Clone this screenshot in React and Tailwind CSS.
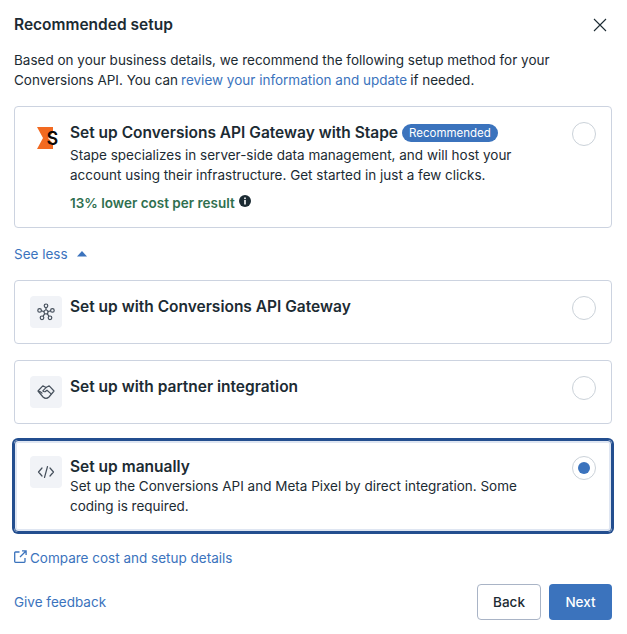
function Radio({ checked }) {
  return (
    <div className="w-6 h-6 rounded-full border border-[#cbd2d9] bg-white flex items-center justify-center shrink-0">
      {checked && <div className="w-3 h-3 rounded-full bg-[#3b73bd]"></div>}
    </div>
  );
}

function IconBox({ children }) {
  return (
    <div className="w-8 h-8 rounded bg-[#f1f3f7] flex items-center justify-center shrink-0 text-[#46505c]">
      {children}
    </div>
  );
}

function StapeLogo() {
  return (
    <svg width="24" height="32" viewBox="0 0 24 32" className="shrink-0">
      <path d="M3 5H19V10.500L14 16L19 21.500V27H3L9 16Z" fill="#f26a21" />
      <text x="12.500" y="23" fontSize="18" fontWeight="600" fill="#0a0a0a" fontFamily="Inter, sans-serif">S</text>
    </svg>
  );
}

function HubIcon() {
  return (
    <svg width="18" height="18" viewBox="0 0 18 18" fill="none" stroke="currentColor" strokeWidth="1.200">
      <circle cx="9" cy="9" r="2" />
      <circle cx="9" cy="2.800" r="1.800" />
      <circle cx="2.600" cy="7.400" r="1.800" />
      <circle cx="15.400" cy="7.400" r="1.800" />
      <circle cx="5" cy="14.800" r="1.800" />
      <circle cx="13" cy="14.800" r="1.800" />
      <path d="M9 4.600v2.400M4.300 7.900l2.800.6M13.700 7.900l-2.800.6M6 13.300l1.800-2.600M12 13.300l-1.800-2.600" />
    </svg>
  );
}

function HandshakeIcon() {
  return (
    <svg width="18" height="18" viewBox="0 0 18 18" fill="none" stroke="currentColor" strokeWidth="1.200" strokeLinejoin="round" strokeLinecap="round">
      <path d="M1 8 5.800 2.800 9 4.600l3.200-1.800L17 8l-5 6c-1.800 1.600-4.200 1.600-6 0z" />
      <path d="M9 4.600 5.800 7.800c.9 1.200 2.200 1.200 3.200.2l1-.8 3.800 3.400" />
      <path d="M1.500 8.300c1.400 0 2.600.6 3.500 1.900" />
    </svg>
  );
}

function CodeIcon() {
  return (
    <svg width="18" height="18" viewBox="0 0 18 18" fill="none" stroke="currentColor" strokeWidth="1.200" strokeLinecap="round" strokeLinejoin="round">
      <path d="M5 5 1.500 9 5 13M13 5l3.500 4-3.500 4M10.500 3.500l-3 11" />
    </svg>
  );
}

function OptionRow({ icon, title }) {
  return (
    <div className="h-16 border border-[#ccd3e0] rounded flex items-start px-[15px] pt-[15px]">
      <IconBox>{icon}</IconBox>
      <div className="ml-2 flex-1 text-[15.5px] leading-[20px] font-semibold mt-px">{title}</div>
      <Radio />
    </div>
  );
}

export default function App() {
  return (
    <div className="w-[627px] h-[634px] bg-white text-[#1c2b33] text-[13.5px] leading-5 font-['Inter',sans-serif] pl-[14px] pr-[15px] pt-[15px] flex flex-col">
      <div className="flex items-center justify-between h-5">
        <div className="text-[15.5px] font-semibold">Recommended setup</div>
        <svg width="14" height="14" viewBox="0 0 14 14" fill="none" stroke="#1c2b33" strokeWidth="1.100" className="mr-[5px]">
          <path d="M1 1l12 12M13 1 1 13" />
        </svg>
      </div>
      <div className="mt-[15px]">
        <div>Based on your business details, we recommend the following setup method for your</div>
        <div className="flex gap-[3px]">
          <span>Conversions API. You can</span>
          <span className="text-[#3b73bd]">review your information and update</span>
          <span>if needed.</span>
        </div>
      </div>

      <div className="mt-4 h-[122px] border border-[#ccd3e0] rounded flex items-start pl-[19px] pr-[15px] pt-[15px]">
        <StapeLogo />
        <div className="ml-[12px] flex-1 mt-px">
          <div className="flex items-center h-5 mb-[2px]">
            <span className="text-[15.5px] font-semibold">Set up Conversions API Gateway with Stape</span>
            <span className="ml-1 h-[18px] px-[7px] rounded-full bg-[#3b73bd] text-white text-[11.5px] leading-[18px]">Recommended</span>
          </div>
          <p className="w-[470px]">
            Stape specializes in server-side data management, and will host your account using their infrastructure. Get started in just a few clicks.
          </p>
          <div className="mt-2 flex items-center gap-1 text-[#2f6f4f] font-semibold">
            13% lower cost per result
            <svg width="12" height="12" viewBox="0 0 12 12" className="mb-[5px]">
              <circle cx="6" cy="6" r="6" fill="#1c2b33" />
              <rect x="5.200" y="5" width="1.600" height="4.500" fill="#fff" />
              <rect x="5.200" y="2.500" width="1.600" height="1.600" fill="#fff" />
            </svg>
          </div>
        </div>
        <Radio />
      </div>

      <div className="mt-4 h-5 flex items-center text-[#3b73bd]">
        See less
        <svg width="10" height="6" viewBox="0 0 10 6" className="ml-[9px]">
          <path d="M5 0 10 5.500H0z" fill="#3b73bd" />
        </svg>
      </div>

      <div className="mt-4 flex flex-col gap-4">
        <OptionRow icon={<HubIcon />} title="Set up with Conversions API Gateway" />
        <OptionRow icon={<HandshakeIcon />} title="Set up with partner integration" />
        <div className="h-[92px] border border-[#234e8f] rounded flex items-start px-[15px] pt-[15px] shadow-[0_0_0_2px_#234e8f,inset_0_0_0_2px_#dfe6f2]">
          <IconBox><CodeIcon /></IconBox>
          <div className="ml-2 flex-1">
            <div className="text-[15.5px] font-semibold mt-px">Set up manually</div>
            <p className="w-[470px] mt-[-1px]">
              Set up the Conversions API and Meta Pixel by direct integration. Some coding is required.
            </p>
          </div>
          <Radio checked />
        </div>
      </div>

      <div className="mt-4 h-5 flex items-center text-[#3b73bd]">
        <svg width="13" height="13" viewBox="0 0 13 13" fill="none" stroke="currentColor" strokeWidth="1.300" className="mr-[3px] mb-[3px]">
          <path d="M5.500 2H1.500a.8.8 0 0 0-.8.8v8.700a.8.8 0 0 0 .8.8h8.700a.8.8 0 0 0 .8-.8V8" />
          <path d="M8 .9h4.100V5M12 1 6 7" />
        </svg>
        Compare cost and setup details
      </div>

      <div className="mt-4 flex items-center justify-between">
        <span className="text-[#3b73bd]">Give feedback</span>
        <div className="flex gap-2">
          <button className="w-16 h-9 border border-[#a9b4c6] rounded font-medium bg-white">Back</button>
          <button className="w-[63px] h-9 rounded font-medium text-white bg-[#3b73bd]">Next</button>
        </div>
      </div>
    </div>
  );
}
